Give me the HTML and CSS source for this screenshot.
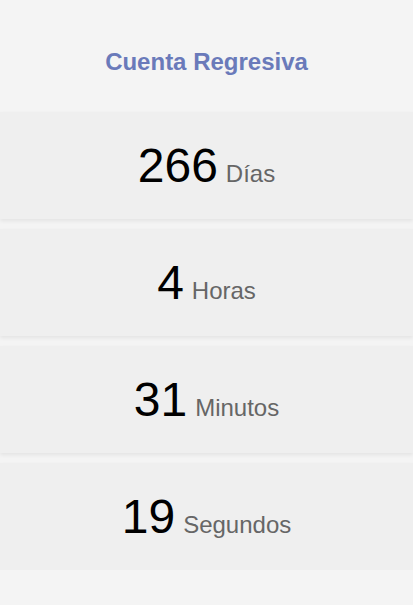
FILE: index.html
```html
<!DOCTYPE html>
<html lang="es">
<head>
<meta charset="utf-8">
<title>Cuenta Regresiva</title>
<link rel="stylesheet" href="styles.css">
</head>
<body>
<header class="header">
  <h1 class="title">Cuenta Regresiva</h1>
</header>
<main class="list">
  <div class="card"><span class="num">266</span><span class="unit">Días</span></div>
  <div class="card"><span class="num">4</span><span class="unit">Horas</span></div>
  <div class="card"><span class="num">31</span><span class="unit">Minutos</span></div>
  <div class="card"><span class="num">19</span><span class="unit">Segundos</span></div>
</main>
</body>
</html>
```
FILE: styles.css
```css
html, body {
  margin: 0;
  padding: 0;
  background: #f4f4f4;
  font-family: "Liberation Sans", Arial, sans-serif;
}
.header {
  height: 112px;
  display: flex;
  align-items: center;
  justify-content: center;
}
.title {
  margin: 0;
  font-size: 24px;
  font-weight: bold;
  color: #6a7aba;
  padding-top: 12px;
}
.list {
  display: flex;
  flex-direction: column;
  gap: 10px;
}
.card {
  height: 107px;
  background: #efefef;
  box-shadow: 0 2px 4px rgba(0,0,0,0.07);
  display: flex;
  align-items: baseline;
  justify-content: center;
  padding-top: 26px;
  box-sizing: border-box;
}
.num {
  font-size: 48px;
  color: #000;
}
.unit {
  font-size: 24px;
  color: #666;
  margin-left: 8px;
}
```
